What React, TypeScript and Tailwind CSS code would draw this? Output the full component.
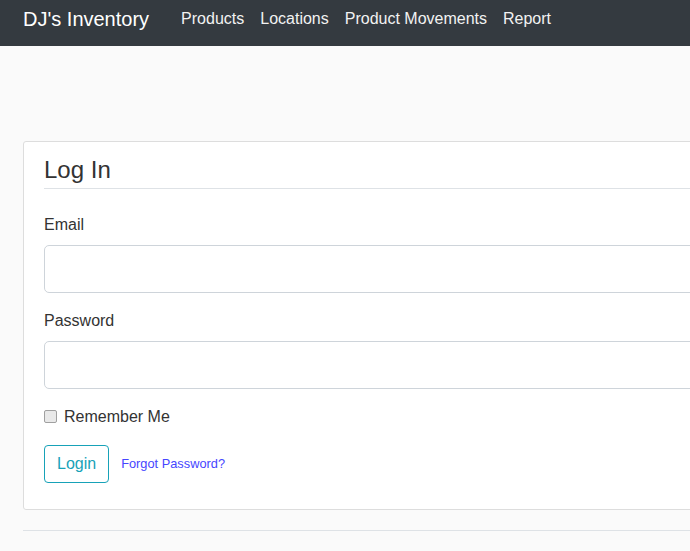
import React from "react";

export default function App() {
  return (
    <div
      className="w-[690px] h-[551px] overflow-hidden bg-[#fafafa] text-[#333]"
      style={{ fontFamily: '"Liberation Sans", Arial, sans-serif' }}
    >
      <nav className="h-[46px] bg-[#343a40] flex items-start pl-[23px] w-[1100px]">
        <a className="mt-[4px] text-[20px] leading-[30px] text-white mr-[24px]">DJ's Inventory</a>
        <div className="flex mt-[7px] -ml-[8px] pl-[8px]">
          {["Products", "Locations", "Product Movements", "Report"].map((l) => (
            <a key={l} className="px-[8px] text-[16px] leading-[24px] text-[#f2f2f2]">
              {l}
            </a>
          ))}
        </div>
      </nav>
      <main className="pl-[23px] pt-[95px] w-[1100px]">
        <div className="bg-white border border-[#dddddd] rounded-[3px] px-[20px] pt-[10px] pb-[10px] mb-[20px]">
          <fieldset>
            <legend className="w-full text-[24px] leading-[36px] border-b border-[#dee2e6] mb-[24px]">
              Log In
            </legend>
            <div className="mb-[16px]">
              <label className="block text-[16px] leading-[24px] mb-[8px]">Email</label>
              <input
                type="text"
                className="block w-full h-[48px] border border-[#ced4da] rounded-[5px] bg-white"
              />
            </div>
            <div className="mb-[16px]">
              <label className="block text-[16px] leading-[24px] mb-[8px]">Password</label>
              <input
                type="password"
                className="block w-full h-[48px] border border-[#ced4da] rounded-[5px] bg-white"
              />
            </div>
            <div className="mb-[16px] relative pl-[20px] text-[16px] leading-[24px]">
              <input
                type="checkbox"
                className="appearance-none absolute left-0 top-[5px] w-[13px] h-[13px] m-0 border border-[#a0a0a0] bg-[#e9e9e9] rounded-[2px]"
              />
              <label>Remember Me</label>
            </div>
          </fieldset>
          <div className="mb-[16px] flex items-center">
            <button className="h-[38px] px-[12px] border border-[#17a2b8] rounded-[4px] text-[#17a2b8] text-[16px] leading-[24px] bg-transparent">
              Login
            </button>
            <small className="ml-[12px] text-[12.8px] text-[#4646ff]">
              <a>Forgot Password?</a>
            </small>
          </div>
        </div>
        <div className="border-t border-[#dee2e6] pt-[16px]"></div>
      </main>
    </div>
  );
}
